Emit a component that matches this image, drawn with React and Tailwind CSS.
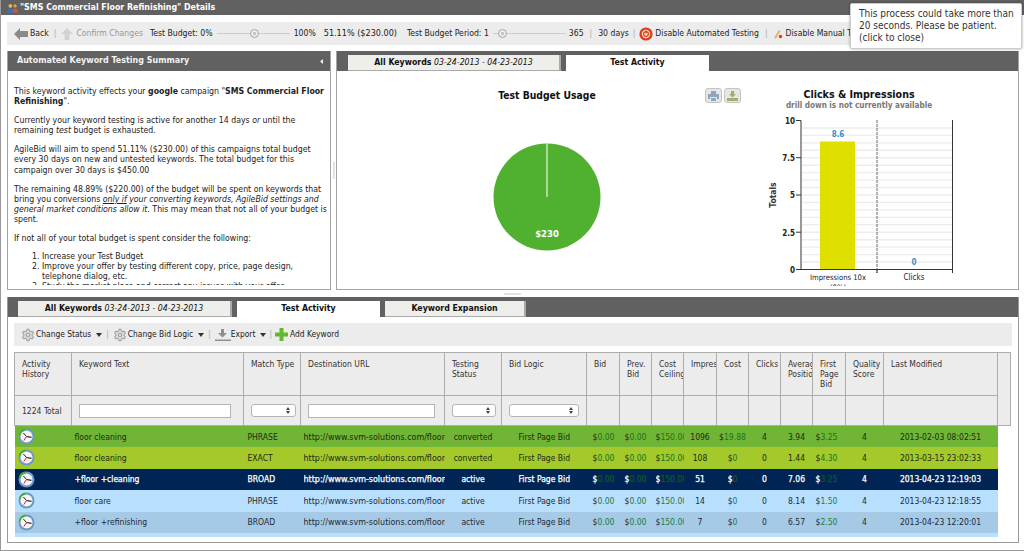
import React from "react";
import { Settings } from "lucide-react";

const rows = [
  { text: "floor cleaning", match: "PHRASE", status: "converted", bid: "0.00", prev: "0.00", imp: "1096", cost: "19.88", clicks: "4", avg: "3.94", first: "3.25", date: "2013-02-03 08:02:51", cls: "bg-[#70b535] text-[#1d2a14]", money: "text-[#15751f]", dollar: "text-[#1d2a14]" },
  { text: "floor cleaning", match: "EXACT", status: "converted", bid: "0.00", prev: "0.00", imp: "108", cost: "0", clicks: "0", avg: "1.44", first: "4.30", date: "2013-03-15 23:02:33", cls: "bg-[#a3c92b] text-[#1d2a14]", money: "text-[#15751f]", dollar: "text-[#1d2a14]" },
  { text: "+floor +cleaning", match: "BROAD", status: "active", bid: "0.00", prev: "0.00", imp: "51", cost: "0", clicks: "0", avg: "7.06", first: "3.25", date: "2013-04-23 12:19:03", cls: "bg-[#002554] text-white [-webkit-text-stroke-width:0.25px]", money: "text-[#0b5a2a]", dollar: "text-white" },
  { text: "floor care", match: "PHRASE", status: "active", bid: "0.00", prev: "0.00", imp: "14", cost: "0", clicks: "0", avg: "8.14", first: "1.50", date: "2013-04-23 12:18:55", cls: "bg-[#b8dffe] text-[#1c2a36]", money: "text-[#15803d]", dollar: "text-[#1c2a36]" },
  { text: "+floor +refinishing", match: "BROAD", status: "active", bid: "0.00", prev: "0.00", imp: "7", cost: "0", clicks: "0", avg: "6.57", first: "2.50", date: "2013-04-23 12:20:01", cls: "bg-[#a6c9e5] text-[#1c2a36]", money: "text-[#15803d]", dollar: "text-[#1c2a36]" },
];

const columns = [57, 172, 57, 144, 57, 85, 33, 32, 32, 33, 32, 32, 32, 33, 38, 114, 13];

const headers = [
  "Activity History",
  "Keyword Text",
  "Match Type",
  "Destination URL",
  "Testing Status",
  "Bid Logic",
  "Bid",
  "Prev. Bid",
  "Cost Ceiling",
  "Impressions",
  "Cost",
  "Clicks",
  "Average Position",
  "First Page Bid",
  "Quality Score",
  "Last Modified",
];

const Sep = () => <span className="text-[#aaaaaa]">|</span>;

const ClockIcon = () => (
  <svg width="17" height="17" viewBox="0 0 17 17" className="block ml-[3px]">
    <circle cx="8.5" cy="8.5" r="8" fill="#6d97c6" />
    <path d="M0.8 7 A8 8 0 0 1 7 0.6 L8.5 8.5 Z" fill="#45b035" />
    <circle cx="8.5" cy="8.5" r="6" fill="#f4f6f8" />
    <path d="M8.5 8.5 L13.5 9.4" stroke="#222" strokeWidth="1.1" />
    <path d="M8.5 8.5 L5.4 5" stroke="#222" strokeWidth="1" />
    <path d="M8.5 8.5 L5.8 12.6" stroke="#d22" strokeWidth="1" />
  </svg>
);

const Slider = ({ knob }) => (
  <span className="relative block w-[73px] h-[11px]">
    <span className="absolute left-0 right-0 top-[5px] h-px bg-[#cdcdcd]" />
    <span className="absolute top-[1px] w-[9px] h-[9px] rounded-full border border-[#a5a5a5] bg-[#ececec] flex items-center justify-center" style={{ left: knob }}>
      <span className="block w-[3px] h-[3px] rounded-full border border-[#a5a5a5]" />
    </span>
  </span>
);

const Tab = ({ active, width, children }) => (
  <div className={`h-[16px] flex items-center justify-center text-[8.7px] text-[#111] ${width} ${active ? "bg-white" : "bg-[#eeeeea] border-r-2 border-b border-[#aaaaaa]"}`}>
    <span className="whitespace-nowrap">{children}</span>
  </div>
);

const Caret = () => (
  <svg width="6" height="4" viewBox="0 0 6 4"><path d="M0 0h6L3 4z" fill="#333" /></svg>
);

const FakeSelect = ({ width }) => (
  <div className={`relative h-[13px] rounded-[3px] border border-[#b5b5b5] bg-white ${width}`}>
    <svg width="4" height="7" viewBox="0 0 4 7" className="absolute right-[5px] top-[2px]">
      <path d="M0 3L2 0l2 3zM0 4l2 3 2-3z" fill="#444" />
    </svg>
  </div>
);

const Money = ({ value, row }) => (
  <span>
    <span className={row.dollar}>$</span>
    <span className={row.money}>{value}</span>
  </span>
);

const Keywords = () => (
  <div className="h-[185px] overflow-hidden">
    <table className="table-fixed border-collapse w-[997px] text-[8.5px] leading-[10px]">
      <colgroup>
        {columns.map((w, i) => (
          <col key={i} style={{ width: w }} />
        ))}
      </colgroup>
      <tbody>
        <tr className="h-[43px] bg-[#ececec] text-[#333]">
          {headers.map((h) => (
            <td key={h} className="border border-[#adadad] align-top pt-[6px] pl-[7px] pr-0">
              <div className="overflow-hidden">{h === "Match Type" || h === "Impressions" ? <span className="whitespace-nowrap">{h}</span> : h}</div>
            </td>
          ))}
          <td rowSpan="2" className="border border-[#adadad]"></td>
        </tr>
        <tr className="h-[30px] bg-[#ececec] text-[#333]">
          <td className="border border-[#adadad] pl-[7px] whitespace-nowrap">1224 Total</td>
          <td className="border border-[#adadad] pl-[7px]">
            <input className="block w-[152px] h-[14px] border border-[#b5b5b5] bg-white" />
          </td>
          <td className="border border-[#adadad] pl-[7px]"><FakeSelect width="w-[45px]" /></td>
          <td className="border border-[#adadad] pl-[7px]">
            <input className="block w-[127px] h-[14px] border border-[#b5b5b5] bg-white" />
          </td>
          <td className="border border-[#adadad] pl-[7px]"><FakeSelect width="w-[44px]" /></td>
          <td className="border border-[#adadad] pl-[7px]"><FakeSelect width="w-[70px]" /></td>
          {columns.slice(6, 16).map((w, i) => (
            <td key={i} className="border border-[#adadad]"></td>
          ))}
        </tr>
        {rows.map((r, i) => (
          <tr key={i} className={`h-[21.5px] whitespace-nowrap ${r.cls}`}>
            <td><ClockIcon /></td>
            <td className="pl-[3px]">{r.text}</td>
            <td className="pl-[4px]">{r.match}</td>
            <td className="pl-[3px]"><div className="overflow-hidden w-[141px] text-[8.9px]">http://www.svm-solutions.com/floor-cleaning</div></td>
            <td className="text-center">{r.status}</td>
            <td className="pl-[17px]">First Page Bid</td>
            <td className="pl-[6px]"><Money value={r.bid} row={r} /></td>
            <td className="pl-[5px]"><Money value={r.prev} row={r} /></td>
            <td className="pl-[4px]"><div className="overflow-hidden w-[28px]"><Money value="150.00" row={r} /></div></td>
            <td className="text-center">{r.imp}</td>
            <td className="text-center"><Money value={r.cost} row={r} /></td>
            <td className="text-center">{r.clicks}</td>
            <td className="text-center">{r.avg}</td>
            <td className="pl-[3px]"><Money value={r.first} row={r} /></td>
            <td className="text-center">4</td>
            <td className="text-center">{r.date}</td>
            <td className="bg-white"></td>
          </tr>
        ))}
        <tr className="h-[21px]">
          <td colSpan="16" className="bg-[#b8dffe]"></td>
          <td className="bg-white"></td>
        </tr>
      </tbody>
    </table>
  </div>
);

const PieChart = () => (
  <svg width="420" height="130" viewBox="0 0 420 130" className="block">
    <circle cx="210" cy="65" r="53.5" fill="#50b130" />
    <path d="M210 11.5V65" stroke="#e8f3e2" strokeWidth="1.2" />
    <text x="210" y="105" textAnchor="middle" fill="#fff" fontSize="8.5" fontWeight="700" fontFamily="'DejaVu Sans', sans-serif">$230</text>
  </svg>
);

const BarChart = () => {
  const lines = [];
  for (let i = 1; i < 20; i++) lines.push(i);
  const font = "'DejaVu Sans Condensed', 'DejaVu Sans', sans-serif";
  return (
    <svg width="204" height="172" viewBox="757 114 204 172" className="block">
      {lines.map((i) => (
        <path key={i} d={`M802 ${120.5 + i * 7.45}H952`} stroke="#ededed" strokeWidth="1.4" />
      ))}
      <rect x="820" y="141.5" width="35" height="128" fill="#dfdf00" />
      <path d="M877 120V273" stroke="#555" strokeWidth="0.9" strokeDasharray="3 1" />
      <path d="M801 120.5V269.5H952.5V120" fill="none" stroke="#333" strokeWidth="1" />
      <path d="M796 120.5h5M796 157.7h5M796 195h5M796 232.2h5M796 269.5h5M877 269v4M952.5 269v4" stroke="#333" strokeWidth="1" />
      {[["10", 123.5], ["7.5", 160.5], ["5", 198], ["2.5", 235.5], ["0", 272.5]].map(([t, y]) => (
        <text key={t} x="795" y={y} textAnchor="end" fontSize="8" fontWeight="700" fill="#222" fontFamily={font}>{t}</text>
      ))}
      <text x="838" y="137" textAnchor="middle" fontSize="8" fontWeight="700" fill="#3a8fcf" fontFamily={font}>8.6</text>
      <text x="914" y="265" textAnchor="middle" fontSize="8" fontWeight="700" fill="#3a8fcf" fontFamily={font}>0</text>
      <text x="838" y="280" textAnchor="middle" fontSize="7.6" fill="#223" fontFamily={font}>Impressions 10x</text>
      <text x="838" y="290" textAnchor="middle" fontSize="7.6" fill="#223" fontFamily={font}>(0%)</text>
      <text x="914" y="280" textAnchor="middle" fontSize="8" fill="#223" fontFamily={font}>Clicks</text>
      <text x="776" y="195" textAnchor="middle" fontSize="8.5" fontWeight="700" fill="#333" fontFamily={font} transform="rotate(-90 776 195)">Totals</text>
    </svg>
  );
};

const IconButton = ({ children }) => (
  <span className="w-[17px] h-[15px] rounded-[3px] border border-[#c4c4c4] bg-[#e6e6e6] flex items-center justify-center">{children}</span>
);

export default function App() {
  return (
    <div className="relative w-[1024px] h-[551px] overflow-hidden bg-white border-l border-b border-[#999999] text-[#222] text-[8.7px] font-['DejaVu_Sans_Condensed','DejaVu_Sans',sans-serif]">
      {/* title bar */}
      <div className="h-[15px] bg-[#616161] flex items-center gap-[2px] pl-[6px] text-white text-[8.8px] font-bold">
        <svg width="11" height="10" viewBox="0 0 13 11">
          <circle cx="4" cy="3" r="2.2" fill="#f0b050" />
          <path d="M0 11c0-4 1.5-5 4-5s4 1 4 5z" fill="#3f6fc0" />
          <circle cx="9.5" cy="3" r="2" fill="#e8a040" />
          <path d="M7 11c0-4 1-5 2.5-5S13 7 13 11z" fill="#d8542c" />
        </svg>
        <span>"SMS Commercial Floor Refinishing" Details</span>
      </div>

      {/* top toolbar */}
      <div className="mt-[7px] ml-[6px] mr-[5px] h-[23px] bg-[#ececec] flex items-center whitespace-nowrap overflow-hidden pl-[7px] text-[8.6px]">
        <svg width="14" height="12" viewBox="0 0 14 12"><path d="M0 6l6-6v3h8v6H6v3z" fill="#8a8a8a" /></svg>
        <span className="ml-[2px]">Back</span>
        <span className="ml-[5px]"><Sep /></span>
        <svg width="12" height="12" viewBox="0 0 12 12" className="ml-[5px]"><path d="M6 0l6 6H8.5v6h-5V6H0z" fill="#d2d2d2" /></svg>
        <span className="ml-[3px] text-[#999999]">Confirm Changes</span>
        <span className="ml-[7px]">Test Budget: 0%</span>
        <span className="ml-[4px]"><Slider knob="33px" /></span>
        <span className="ml-[4px]">100%</span>
        <span className="ml-[8px] text-[9px]">51.11% ($230.00)</span>
        <span className="ml-[10px]">Test Budget Period: 1</span>
        <span className="ml-[4px]"><Slider knob="5px" /></span>
        <span className="ml-[3px]">365</span>
        <span className="ml-[6px]"><Sep /></span>
        <span className="ml-[6px]">30 days</span>
        <span className="ml-[4px]"><Sep /></span>
        <svg width="14" height="14" viewBox="0 0 14 14" className="ml-[4px]">
          <circle cx="7" cy="7" r="6.6" fill="#d8401f" />
          <circle cx="7" cy="7" r="4.2" fill="#f7e0c8" />
          <circle cx="7" cy="7" r="2.4" fill="none" stroke="#d8401f" strokeWidth="1.2" />
          <path d="M7 3.5v3" stroke="#d8401f" strokeWidth="1.2" />
        </svg>
        <span className="ml-[2px]">Disable Automated Testing</span>
        <span className="ml-[6px]"><Sep /></span>
        <svg width="10" height="10" viewBox="0 0 10 10" className="ml-[5px]">
          <path d="M1 9l5-8 1.5 1L3 9.5z" fill="#e8b060" />
          <circle cx="7.5" cy="7.5" r="1.7" fill="#d83a2a" />
        </svg>
        <span className="ml-[3px]">Disable Manual Testing</span>
      </div>

      {/* upper panels */}
      <div className="mt-[6px] ml-[6px] mr-[5px] h-[239px] flex">
        <div className="w-[324px] shrink-0 border border-[#a5a5a5] border-t-0 flex flex-col">
          <div className="h-[20px] shrink-0 bg-[#616161] text-[#f2f2f2] text-[8.9px] font-bold flex items-center justify-between pl-[9px] pr-[7px]">
            <span>Automated Keyword Testing Summary</span>
            <svg width="3" height="5" viewBox="0 0 3 5"><path d="M3 0v5L0 2.5z" fill="#eee" /></svg>
          </div>
          <div className="h-[214px] overflow-hidden pl-[6px] pr-[3px] pt-[15px] leading-[10.3px] text-[#222]">
            <p>This keyword activity effects your <b>google</b> campaign "<b>SMS Commercial Floor Refinishing</b>".</p>
            <p className="mt-[8.5px]">Currently your keyword testing is active for another 14 days <i>or</i> until the remaining <i>test</i> budget is exhausted.</p>
            <p className="mt-[8.5px]">AgileBid will aim to spend 51.11% ($230.00) of this campaigns total budget every 30 days on new and untested keywords. The total budget for this campaign over 30 days is $450.00</p>
            <p className="mt-[8.5px]">The remaining 48.89% ($220.00) of the budget will be spent on keywords that bring you conversions <i><u>only if</u> your converting keywords, AgileBid settings and general market conditions allow it.</i> This may mean that not all of your budget is spent.</p>
            <p className="mt-[8px]">If not all of your total budget is spent consider the following:</p>
            <ol className="mt-[7.5px] pl-[28px] list-decimal">
              <li>Increase your Test Budget</li>
              <li>Improve your offer by testing different copy, price, page design, telephone dialog, etc.</li>
              <li>Study the market place and correct any issues with your offer</li>
            </ol>
          </div>
        </div>

        <div className="w-[5px] shrink-0 flex items-center justify-center">
          <span className="block w-[2px] h-[17px] bg-[#e2e2e2]" />
        </div>

        <div className="flex-1 border border-[#a5a5a5] border-t-0 flex flex-col">
          <div className="h-[20px] shrink-0 bg-[#616161] flex items-end gap-[5px] pl-[11px] font-bold">
            <Tab width="w-[213px]">All Keywords <i className="font-normal">03-24-2013 - 04-23-2013</i></Tab>
            <Tab active width="w-[143px]">Test Activity</Tab>
          </div>
          <div className="flex-1 flex overflow-hidden">
            <div className="relative w-[420px] shrink-0">
              <h2 className="text-center text-[10.3px] font-bold text-[#111] pt-[17px] leading-[14px]">Test Budget Usage</h2>
              <div className="mt-[30px]"><PieChart /></div>
              <div className="absolute left-[368px] top-[17px] flex gap-[2px]">
                <IconButton>
                  <svg width="11" height="10" viewBox="0 0 11 10"><path d="M3 0h5v3H3zM0 3h11v5H9V6H2v2H0zM3 7h5v3H3z" fill="#8fa6bd" /></svg>
                </IconButton>
                <IconButton>
                  <svg width="11" height="10" viewBox="0 0 11 10"><path d="M4 0h3v3h2L5.5 6.5 2 3h2zM0 7h11v3H0z" fill="#9db06f" /></svg>
                </IconButton>
              </div>
            </div>
            <div className="w-[204px] shrink-0">
              <h2 className="text-center text-[10.6px] font-bold text-[#111] pt-[17px] leading-[12px] whitespace-nowrap">Clicks &amp; Impressions</h2>
              <p className="text-center text-[8.1px] font-bold text-[#777777] leading-[11px] whitespace-nowrap">drill down is not currently available</p>
              <div className="mt-[3px]"><BarChart /></div>
            </div>
          </div>
        </div>
      </div>

      {/* divider */}
      <div className="h-[7px] flex items-center justify-center">
        <span className="block w-[17px] h-[2px] bg-[#e2e2e2]" />
      </div>

      {/* lower panel */}
      <div className="ml-[6px] mr-[5px] h-[246px] border border-[#999999] border-t-0 overflow-hidden">
        <div className="h-[20px] bg-[#616161] flex items-end gap-[5px] pl-[10px] font-bold">
          <Tab width="w-[214px]">All Keywords <i className="font-normal">03-24-2013 - 04-23-2013</i></Tab>
          <Tab active width="w-[143px]">Test Activity</Tab>
          <Tab width="w-[141px]">Keyword Expansion</Tab>
        </div>
        <div className="mt-[6px] ml-[6px] mr-[6px] h-[23px] bg-[#ececec] flex items-center pl-[7px] whitespace-nowrap text-[8.4px]">
          <Settings size={14} className="text-[#a5a5a5] fill-[#dcdcdc]" />
          <span className="ml-[1px]">Change Status</span>
          <span className="ml-[5px]"><Caret /></span>
          <span className="ml-[4px]"><Sep /></span>
          <Settings size={14} className="ml-[4px] text-[#a5a5a5] fill-[#dcdcdc]" />
          <span className="ml-[1px]">Change Bid Logic</span>
          <span className="ml-[5px]"><Caret /></span>
          <span className="ml-[4px]"><Sep /></span>
          <svg width="16" height="12" viewBox="0 0 16 12" className="ml-[4px]"><path d="M6 0h3v4h3L7.5 8.5 3 4h3zM0 10.5h16V12H0z" fill="#8f8f8f" /></svg>
          <span>Export</span>
          <span className="ml-[5px]"><Caret /></span>
          <span className="ml-[3px]"><Sep /></span>
          <svg width="13" height="13" viewBox="0 0 13 13" className="ml-[3px]"><path d="M4.5 0h4v4.5H13v4H8.5V13h-4V8.5H0v-4h4.5z" fill="#62b92f" /></svg>
          <span className="ml-[2px]">Add Keyword</span>
        </div>
        <div className="mt-[6px] ml-[6px]">
          <Keywords />
        </div>
      </div>

      {/* notice */}
      <div className="absolute left-[849px] top-[3px] w-[172px] h-[46px] bg-white rounded-[2px] border border-[#cccccc] shadow-[0_0_3px_rgba(0,0,0,0.35)] pl-[8px] pr-[6px] pt-[4px] text-[10px] leading-[12px] text-[#333]">
        This process could take more than 20 seconds. Please be patient.
        <br />
        (click to close)
      </div>
    </div>
  );
}
